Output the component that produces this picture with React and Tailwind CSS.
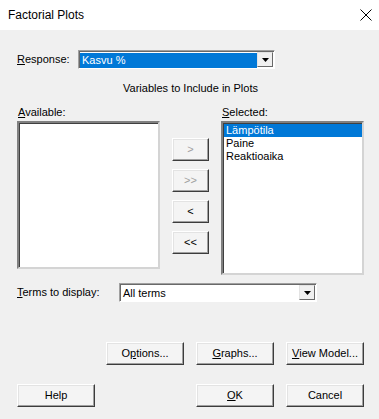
import React from "react";

const font = { fontFamily: "Tahoma, 'Liberation Sans', 'DejaVu Sans', sans-serif" };

function Btn({ children, className = "", disabled }) {
  return (
    <button
      className={`h-[23px] bg-[#f4f4f4] border border-t-white border-l-white border-b-[#3c3c3c] border-r-[#3c3c3c] shadow-[inset_-1px_-1px_0_#a0a0a0,inset_1px_1px_0_#e3e3e3] text-[11px] flex items-center justify-center ${disabled ? "text-[#a0a0a0]" : "text-black"} ${className}`}
    >
      {children}
    </button>
  );
}

function Combo({ value, selected, className = "" }) {
  return (
    <div className={`h-[19px] flex border border-t-[#a0a0a0] border-l-[#a0a0a0] border-b-white border-r-white shadow-[inset_1px_1px_0_#696969] bg-white ${className}`}>
      <div className="flex-1 flex items-center pl-[1px] pt-[1px]">
        <span className={`h-[15px] flex-1 flex items-center pl-[2px] text-[11px] ${selected ? "bg-[#0078d7] text-white" : "text-black"}`}>{value}</span>
      </div>
      <div className="w-[16px] m-[1px] ml-0 bg-[#f0f0f0] border border-t-[#e3e3e3] border-l-[#e3e3e3] border-b-[#696969] border-r-[#696969] flex items-center justify-center">
        <svg width="7" height="4" viewBox="0 0 7 4"><path d="M0 0h7L3.5 4z" fill="#000" /></svg>
      </div>
    </div>
  );
}

function ListBox({ items = [], className = "" }) {
  return (
    <div className={`bg-white border-2 border-t-[#808080] border-l-[#808080] border-b-[#d4d4d4] border-r-[#d4d4d4] shadow-[inset_1px_1px_0_#404040] pt-[1px] pl-[1px] ${className}`}>
      {items.map((it, i) => (
        <div key={it} className={`h-[13px] leading-[13px] pl-[2px] text-[11px] ${i === 0 ? "bg-[#0078d7] text-white" : "text-black"}`}>{it}</div>
      ))}
    </div>
  );
}

export default function App() {
  return (
    <div style={font} className="w-[379px] h-[419px] bg-[#f0f0f0] flex flex-col text-[11px] text-black overflow-hidden">
      <div className="h-[30px] bg-white flex items-center justify-between pl-[8px] pr-[7px]">
        <span className="text-[12px]">Factorial Plots</span>
        <svg width="12" height="12" viewBox="0 0 12 12"><path d="M0.5 0.5l11 11M11.5 0.5l-11 11" stroke="#000" strokeWidth="1" /></svg>
      </div>

      <div className="flex-1 pl-[17px] pr-[15px]">
        <div className="mt-[20px] flex items-center h-[19px]">
          <span className="w-[61px]"><u>R</u>esponse:</span>
          <Combo value="Kasvu %" selected className="w-[197px]" />
        </div>

        <div className="mt-[13px] h-[13px] leading-[13px] text-center">Variables to Include in Plots</div>

        <div className="mt-[11px] flex h-[13px] leading-[13px]">
          <span className="w-[204px] pl-[1px]"><u>A</u>vailable:</span>
          <span className="pl-[1px]"><u>S</u>elected:</span>
        </div>

        <div className="mt-[2px] flex items-start">
          <ListBox className="w-[143px] h-[148px]" />
          <div className="ml-[12px] mt-[17px] flex flex-col gap-[8px]">
            <Btn disabled className="w-[37px]">&gt;</Btn>
            <Btn disabled className="w-[37px]">&gt;&gt;</Btn>
            <Btn className="w-[37px]">&lt;</Btn>
            <Btn className="w-[37px]">&lt;&lt;</Btn>
          </div>
          <ListBox items={["Lämpötila", "Paine", "Reaktioaika"]} className="ml-[12px] w-[143px] h-[154px]" />
        </div>

        <div className="mt-[8px] flex items-center h-[19px]">
          <span className="w-[102px]"><u>T</u>erms to display:</span>
          <Combo value="All terms" className="w-[198px]" />
        </div>

        <div className="mt-[40px] flex justify-end gap-[12px]">
          <Btn className="w-[78px]">O<u>p</u>tions...</Btn>
          <Btn className="w-[78px]"><u>G</u>raphs...</Btn>
          <Btn className="w-[78px]"><u>V</u>iew Model...</Btn>
        </div>

        <div className="mt-[19px] flex">
          <Btn className="w-[78px]">Help</Btn>
          <div className="flex-1" />
          <div className="flex gap-[12px]">
            <Btn className="w-[78px]"><u>O</u>K</Btn>
            <Btn className="w-[78px]">Cancel</Btn>
          </div>
        </div>
      </div>
    </div>
  );
}
